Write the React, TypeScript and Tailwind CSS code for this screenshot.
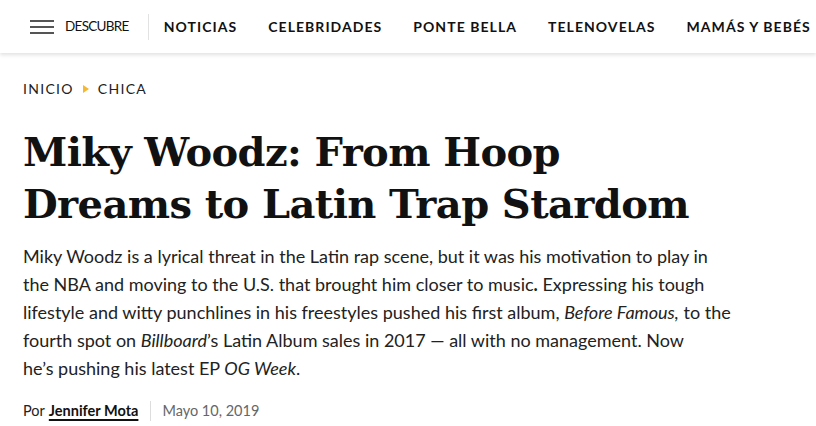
export default function App() {
  const nav = ["NOTICIAS", "CELEBRIDADES", "PONTE BELLA", "TELENOVELAS", "MAMÁS Y BEBÉS"];
  return (
    <div className="w-[816px] h-[426px] overflow-hidden bg-white text-[#111] font-['Lato',sans-serif]">
      <header className="h-[53px] flex items-center pl-[30px] shadow-[0_2px_4px_rgba(0,0,0,0.12)] relative z-10 whitespace-nowrap">
        <svg width="24" height="14" viewBox="0 0 24 14" className="shrink-0">
          <rect x="0" y="0" width="24" height="2" fill="#555" />
          <rect x="0" y="6" width="24" height="2" fill="#555" />
          <rect x="0" y="12" width="24" height="2" fill="#555" />
        </svg>
        <span className="ml-[11px] text-[13.5px] tracking-[-0.7px] text-[#111]">DESCUBRE</span>
        <span className="ml-[19px] w-px h-[26px] bg-[#e2e2e2]" />
        <nav className="ml-[15px] flex gap-[31px]">
          {nav.map((n) => (
            <span key={n} className="text-[14px] font-bold tracking-[1.05px]">{n}</span>
          ))}
        </nav>
      </header>
      <main className="px-[23px]">
        <div className="mt-[26px] flex items-center text-[14px] tracking-[1.3px] text-[#222] leading-[20px]">
          <span>INICIO</span>
          <svg width="6" height="8" viewBox="0 0 6 8" className="mx-[9px]">
            <path d="M0 0 L6 4 L0 8 Z" fill="#f5b82e" />
          </svg>
          <span>CHICA</span>
        </div>
        <h1 className="mt-[27px] font-['DejaVu_Serif',serif] font-bold text-[40px] leading-[52px] tracking-[-0.6px] text-[#111]">
          Miky Woodz: From Hoop<br />Dreams to Latin Trap Stardom
        </h1>
        <p className="mt-[12px] text-[18px] leading-[28px] text-[#222] whitespace-nowrap">
          Miky Woodz is a lyrical threat in the Latin rap scene, but it was his motivation to play in<br />
          the NBA and moving to the U.S. that brought him closer to music<b>.</b> Expressing his tough<br />
          lifestyle and witty punchlines in his freestyles pushed his first album, <i>Before Famous,</i> to the<br />
          fourth spot on <i>Billboard</i>’s Latin Album sales in 2017 — all with no management. Now<br />
          he’s pushing his latest EP <i>OG Week</i>.
        </p>
        <div className="mt-[19px] flex items-center text-[14.5px] leading-[20px]">
          <span className="text-[#222]">Por</span>
          <span className="ml-[4px] font-bold underline underline-offset-[3px] decoration-[1.5px]">Jennifer Mota</span>
          <span className="ml-[12px] w-px h-[20px] bg-[#ddd]" />
          <span className="ml-[11px] text-[#666]">Mayo 10, 2019</span>
        </div>
      </main>
    </div>
  );
}
